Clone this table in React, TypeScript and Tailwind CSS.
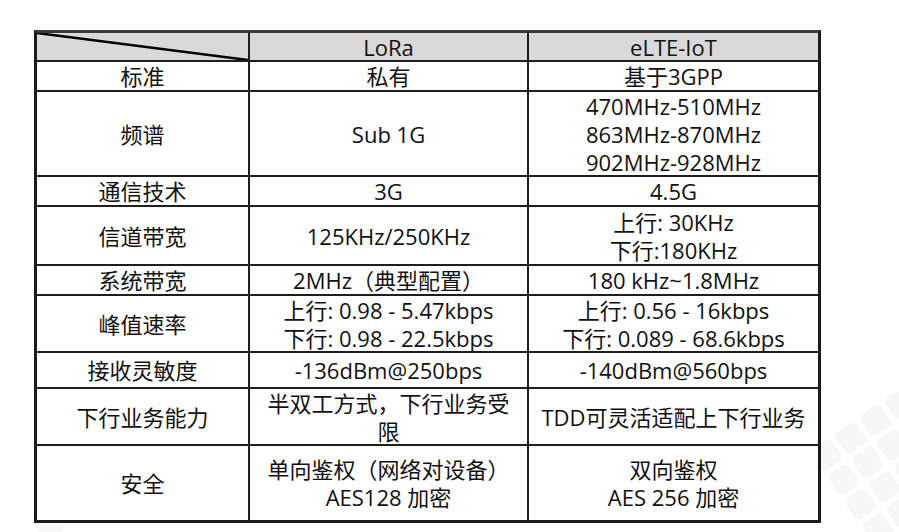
import React from "react";

const font = { fontFamily: '"Open Sans", "Noto Sans CJK SC", sans-serif' };

function Cell({ children, className = "" }: { children: React.ReactNode; className?: string }) {
  return (
    <div className={`bg-white flex flex-col items-center justify-center text-center text-[22px] leading-[28px] text-[#111] ${className}`}>
      {children}
    </div>
  );
}

function Tiles() {
  const rects: React.ReactNode[] = [];
  for (let i = 0; i < 5; i++) {
    for (let j = 0; j < 5; j++) {
      rects.push(
        <rect key={`${i}-${j}`} x={i * 30} y={j * 30} width={25} height={25} rx={5} fill="#f7f7f7" />
      );
    }
  }
  return (
    <svg className="absolute right-0 bottom-0" width="110" height="140" viewBox="0 0 110 140">
      <g transform="translate(20 60) rotate(-35)">{rects}</g>
    </svg>
  );
}

function TilesLeft() {
  const rects: React.ReactNode[] = [];
  for (let i = 0; i < 10; i++) {
    rects.push(<rect key={i} x={i * 34} y={0} width={26} height={28} rx={5} fill="#f8f8f8" />);
  }
  return (
    <svg className="absolute left-0 bottom-0" width="320" height="30" viewBox="0 0 320 30">
      <g transform="translate(30 14) rotate(-30)">{rects}</g>
    </svg>
  );
}

export default function App() {
  return (
    <div className="relative w-[899px] h-[532px] bg-white overflow-hidden" style={font}>
      <Tiles />
      <TilesLeft />
      <div className="relative pt-[30px] pl-[34px]">
        <div className="w-[787px] border-[3px] border-[#1a1a1a] border-t-[#3a3a3a] bg-[#1e1e1e] grid grid-cols-[211px_277px_289px] grid-rows-[27px_28px_83px_28px_57px_28px_55px_34px_55px_74px] gap-[2px]">
          <div className="relative bg-[#d9d9d9]">
            <svg className="absolute inset-0 w-full h-full" viewBox="0 0 211 27" preserveAspectRatio="none">
              <line x1="0" y1="0" x2="211" y2="27" stroke="#000" strokeWidth="2.5" />
            </svg>
          </div>
          <Cell className="!bg-[#d9d9d9]">LoRa</Cell>
          <Cell className="!bg-[#d9d9d9]">eLTE-IoT</Cell>

          <Cell>标准</Cell>
          <Cell>私有</Cell>
          <Cell>基于3GPP</Cell>

          <Cell>频谱</Cell>
          <Cell>Sub 1G</Cell>
          <Cell>
            <span>470MHz-510MHz</span>
            <span>863MHz-870MHz</span>
            <span>902MHz-928MHz</span>
          </Cell>

          <Cell>通信技术</Cell>
          <Cell>3G</Cell>
          <Cell>4.5G</Cell>

          <Cell>信道带宽</Cell>
          <Cell>125KHz/250KHz</Cell>
          <Cell>
            <span>上行: 30KHz</span>
            <span>下行:180KHz</span>
          </Cell>

          <Cell>系统带宽</Cell>
          <Cell>2MHz（典型配置）</Cell>
          <Cell>180 kHz~1.8MHz</Cell>

          <Cell>峰值速率</Cell>
          <Cell className="leading-[27px]">
            <span>上行: 0.98 - 5.47kbps</span>
            <span>下行: 0.98 - 22.5kbps</span>
          </Cell>
          <Cell className="leading-[27px]">
            <span>上行: 0.56 - 16kbps</span>
            <span>下行: 0.089 - 68.6kbps</span>
          </Cell>

          <Cell>接收灵敏度</Cell>
          <Cell>-136dBm@250bps</Cell>
          <Cell>-140dBm@560bps</Cell>

          <Cell>下行业务能力</Cell>
          <Cell>
            <span>半双工方式，下行业务受</span>
            <span>限</span>
          </Cell>
          <Cell>TDD可灵活适配上下行业务</Cell>

          <Cell>安全</Cell>
          <Cell>
            <span>单向鉴权（网络对设备）</span>
            <span>AES128 加密</span>
          </Cell>
          <Cell>
            <span>双向鉴权</span>
            <span>AES 256 加密</span>
          </Cell>
        </div>
      </div>
    </div>
  );
}
